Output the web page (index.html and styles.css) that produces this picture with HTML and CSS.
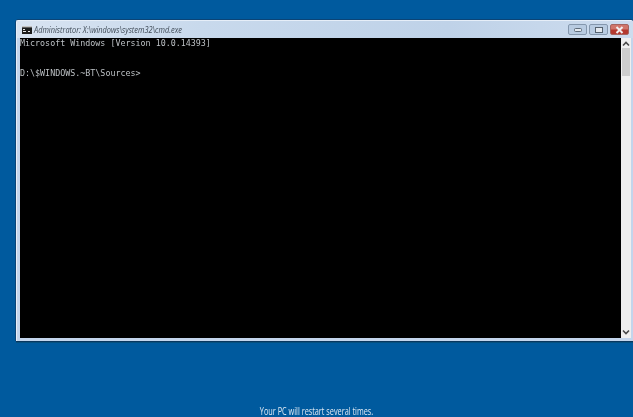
FILE: index.html
```html
<!DOCTYPE html>
<html lang="en">
<head>
<meta charset="utf-8">
<title>cmd.exe</title>
<link rel="stylesheet" href="styles.css">
</head>
<body>
<main class="desktop">
  <section class="window">
    <header class="titlebar">
      <svg class="app-icon" width="10" height="8" viewBox="0 0 10 8"><rect width="10" height="8" fill="#1c1c1c"/><rect y="0" width="10" height="1.400" fill="#c4c4c4"/><path d="M1 3.500h2M1 5.500h3M6 5.500h2" stroke="#e8e8e8" stroke-width="1"/></svg>
      <span class="title">Administrator: X:\windows\system32\cmd.exe</span>
      <div class="controls">
        <div class="btn"><svg width="10" height="6" viewBox="0 0 10 6"><rect x="1.500" y="1.500" width="7" height="3" rx="1" fill="#e3e9f0" stroke="#5d6b7a"/></svg></div>
        <div class="btn"><svg width="10" height="8" viewBox="0 0 10 8"><rect x="1.500" y="1.500" width="7" height="5" fill="#e3e9f0" stroke="#55626f"/></svg></div>
        <div class="btn btn-close"><svg width="11" height="8" viewBox="0 0 11 8"><path d="M2.500 1 8.500 7M8.500 1 2.500 7" stroke="#f3eeee" stroke-width="2"/></svg></div>
      </div>
    </header>
    <div class="body">
      <pre class="console">Microsoft Windows [Version 10.0.14393]


D:\$WINDOWS.~BT\Sources&gt;</pre>
      <aside class="scrollbar">
        <svg width="10" height="8" viewBox="0 0 10 8"><path d="M2 5.500 5 2.500 8 5.500" fill="none" stroke="#4a4a4a" stroke-width="1.600"/></svg>
        <div class="thumb"></div>
        <svg class="arrow-down" width="10" height="8" viewBox="0 0 10 8"><path d="M2 2.500 5 5.500 8 2.500" fill="none" stroke="#4a4a4a" stroke-width="1.600"/></svg>
      </aside>
    </div>
  </section>
  <p class="status">Your PC will restart several times.</p>
</main>
</body>
</html>
```
FILE: styles.css
```css
* { box-sizing: border-box; }
html, body { margin: 0; height: 100%; overflow: hidden; }
body { background: #005a9e; }
.desktop {
  width: 633px;
  height: 417px;
  padding: 20px 0 0 16px;
  display: flex;
  flex-direction: column;
  overflow: hidden;
}
.window {
  width: 617px;
  height: 321px;
  flex: none;
  display: flex;
  flex-direction: column;
  background: #c3d5ec;
  border-left: 1px solid #e6eef8;
  border-top: 1px solid #e6eef8;
  box-shadow: 0 -1px 0 #0b4476, -1px 0 0 #0b4476, 0 1px 0 #08375f, 0 2px 0 #06507f;
  border-radius: 2px 2px 0 0;
}
.titlebar {
  height: 17px;
  flex: none;
  display: flex;
  align-items: center;
  padding: 0 0 0 5px;
  background: linear-gradient(90deg, #d8e3f1 0%, #c8d9ec 30%, #bfd2e8 70%, #cddcee 100%);
}
.app-icon { flex: none; margin-right: 2px; }
.title {
  font: italic 8.800px "Open Sans", sans-serif;
  color: #3f4a56;
  white-space: nowrap;
  filter: blur(0.3px);
  padding-top: 1px;
  transform: scaleX(0.84);
  transform-origin: left center;
}
.controls {
  margin-left: auto;
  display: flex;
  gap: 2px;
  align-self: flex-start;
  padding: 3px 4px 0 0;
}
.btn {
  width: 19px;
  height: 11px;
  display: flex;
  align-items: center;
  justify-content: center;
  background: #b8cbe1;
  border: 1px solid #8497ad;
  border-radius: 2px;
  filter: blur(0.3px);
}
.btn-close {
  background: linear-gradient(#d0756a 0 40%, #b5392f 60%);
  border-color: #a5645f;
}
.body {
  flex: 1;
  display: flex;
  padding: 0 2px 3px 3px;
  min-height: 0;
}
.console {
  width: 601px;
  margin: 0;
  padding: 0;
  background: #000;
  color: #bcc0c4;
  font: 8.350px/10px "DejaVu Sans Mono", monospace;
  filter: blur(0.35px);
}
.scrollbar {
  width: 10px;
  display: flex;
  flex-direction: column;
  background: #efefef;
}
.scrollbar svg { flex: none; margin-top: 2px; }
.scrollbar .arrow-down { margin: auto 0 2px; }
.thumb {
  flex: none;
  height: 28px;
  margin: 0 1px;
  background: #cdcdcd;
}
.status {
  margin: 0;
  flex: none;
  width: 633px;
  margin-left: -16px;
  padding-top: 64px;
  text-align: center;
  font: 10px "Open Sans", sans-serif;
  color: #dfeaf4;
  line-height: 12px;
  transform: scaleX(0.73);
}
```
